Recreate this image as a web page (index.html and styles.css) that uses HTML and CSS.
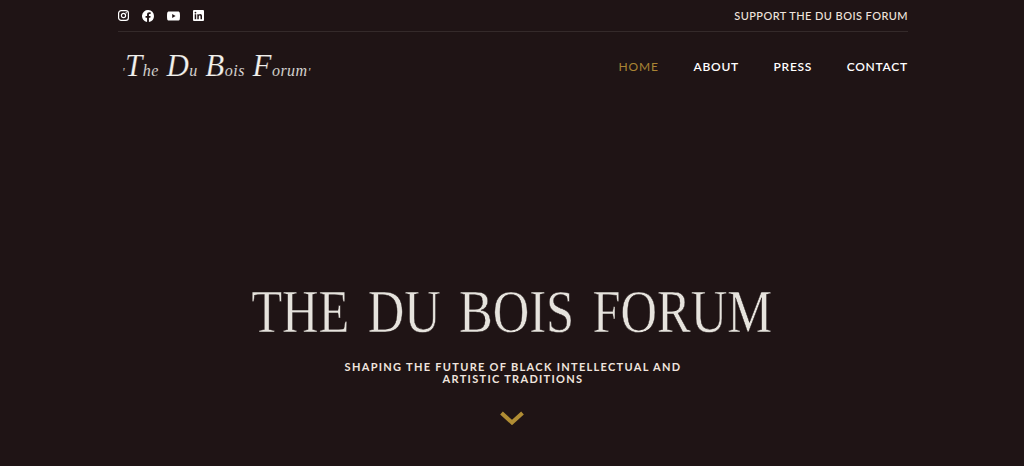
FILE: index.html
```html
<!DOCTYPE html>
<html lang="en">
<head>
    <meta charset="UTF-8">
    <meta name="viewport" content="width=device-width, initial-scale=1.0">
    <title>The Du Bois Forum</title>
    <link rel="stylesheet" href="styles.css">
</head>
<body>

    <header class="site-header">
        <div class="top-bar">
            <div class="social-icons">
                <a href="#" aria-label="Instagram">
                    <svg viewBox="0 0 11 11" width="11" height="11">
                        <rect x="0.6" y="0.6" width="9.8" height="9.8" rx="2.6" fill="none" stroke="#fff" stroke-width="1.2"/>
                        <circle cx="5.5" cy="5.5" r="2.1" fill="none" stroke="#fff" stroke-width="1.2"/>
                        <circle cx="8.2" cy="2.8" r="0.7" fill="#fff"/>
                    </svg>
                </a>
                <a href="#" aria-label="Facebook">
                    <svg viewBox="0 0 12 12" width="12" height="12">
                        <path fill="#fff" d="M12 6a6 6 0 1 0-6.94 5.93V7.73H3.54V6h1.52V4.68c0-1.5.9-2.33 2.26-2.33.66 0 1.34.12 1.34.12v1.47h-.75c-.74 0-.97.46-.97.94V6h1.66l-.27 1.73H6.94v4.2A6 6 0 0 0 12 6z"/>
                    </svg>
                </a>
                <a href="#" aria-label="YouTube">
                    <svg viewBox="0 0 13 10" width="13" height="10">
                        <path fill="#fff" fill-rule="evenodd" d="M2 .5h9c1 0 1.7.7 1.8 1.6.1.9.2 1.9.2 2.9s-.1 2-.2 2.9c-.1.9-.8 1.6-1.8 1.6H2C1 9.500.3 8.800.2 7.900.1 7 0 6 0 5s.1-2 .2-2.900C.3 1.200 1 .5 2 .5zM5.200 3v4l3.400-2z"/>
                    </svg>
                </a>
                <a href="#" aria-label="LinkedIn">
                    <svg viewBox="0 0 11 11" width="11" height="11">
                        <path fill="#fff" fill-rule="evenodd" d="M1 0h9a1 1 0 0 1 1 1v9a1 1 0 0 1-1 1H1a1 1 0 0 1-1-1V1a1 1 0 0 1 1-1zM1.700 4.200v5h1.500v-5zM2.450 1.700a.9.9 0 1 0 0 1.800.9.9 0 0 0 0-1.800zM4.300 4.200v5h1.500V6.700c0-.7.300-1.200.9-1.200s.8.500.8 1.200v2.500h1.500V6.300c0-1.400-.7-2.200-1.800-2.200-.7 0-1.200.300-1.400.8v-.7z"/>
                    </svg>
                </a>
            </div>
            <a href="#" class="support-link">SUPPORT THE DU BOIS FORUM</a>
        </div>

        <div class="main-nav">
            <a href="#" class="logo"><span class="dot">'</span><span class="big">T</span>he <span class="big">D</span>u <span class="big">B</span>ois <span class="big">F</span>orum<span class="dot">'</span></a>
            <nav class="nav-links">
                <a href="#" class="active">HOME</a>
                <a href="#">ABOUT</a>
                <a href="#">PRESS</a>
                <a href="#">CONTACT</a>
            </nav>
        </div>
    </header>

    <main class="hero">
        <h1>THE DU BOIS FORUM</h1>
        <p>SHAPING THE FUTURE OF BLACK INTELLECTUAL AND ARTISTIC TRADITIONS</p>
        <svg class="arrow-down" viewBox="0 0 24 14" width="24" height="14">
            <path d="M1.500 2l10.500 9.500L22.500 2" fill="none" stroke="#b08d34" stroke-width="4"/>
        </svg>
    </main>

</body>
</html>
```

FILE: styles.css
```css
body {
    font-family: Lato, Arial, sans-serif;
    margin: 0;
    padding: 0;
    background-color: #1f1415;
    height: 466px;
    overflow: hidden;
    display: flex;
    flex-direction: column;
}

a {
    text-decoration: none;
    color: #fff;
}

.site-header {
    width: 790px;
    margin-left: 118px;
}

.top-bar {
    display: flex;
    justify-content: space-between;
    align-items: center;
    height: 31px;
    border-bottom: 1px solid #342a2a;
}

.social-icons {
    display: flex;
    align-items: center;
    gap: 13px;
}

.social-icons a {
    display: flex;
}

.support-link {
    font-size: 11px;
    font-weight: 500;
    letter-spacing: 0.43px;
    color: #efe4de;
}

.main-nav {
    display: flex;
    justify-content: space-between;
    align-items: center;
    height: 68px;
}

.logo {
    font-family: "Liberation Serif", serif;
    font-style: italic;
    font-size: 16px;
    color: #f2f0ec;
    padding-left: 4px;
    letter-spacing: 0.5px;
    word-spacing: 3px;
    -webkit-text-stroke: 0.2px #1f1415;
}

.logo .big {
    font-size: 31px;
    line-height: 40px;
}

.logo .dot {
    font-size: 12px;
}

.nav-links {
    display: flex;
    gap: 34.5px;
}

.nav-links a {
    font-size: 12px;
    font-weight: 600;
    letter-spacing: 0.75px;
}

.nav-links a.active {
    color: #a98434;
    font-weight: 400;
    letter-spacing: 0.9px;
}

.hero {
    flex: 1;
    display: flex;
    flex-direction: column;
    align-items: center;
    padding-top: 176px;
}

.hero h1 {
    font-family: "Liberation Serif", serif;
    font-weight: 400;
    font-size: 62px;
    line-height: 70px;
    margin: 0;
    white-space: nowrap;
    color: #e6e3dd;
    word-spacing: 7px;
    transform: scaleX(0.815);
    -webkit-text-stroke: 0.5px #1f1415;
}

.hero p {
    width: 345px;
    margin: 15px 0 0 2px;
    font-size: 11px;
    font-weight: 700;
    line-height: 12px;
    letter-spacing: 1.3px;
    text-align: center;
    color: #efe4de;
}

.arrow-down {
    margin-top: 26px;
}
```
